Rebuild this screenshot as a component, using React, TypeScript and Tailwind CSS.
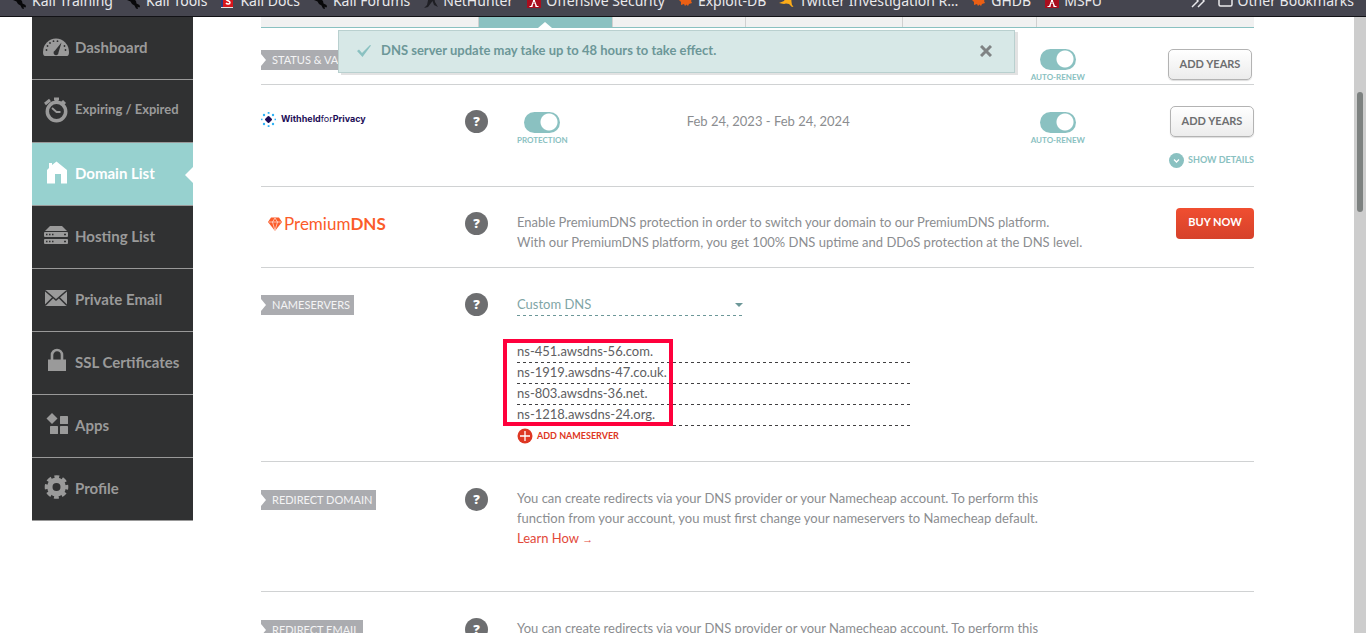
import type { ReactNode } from 'react';

/* ---------- browser bookmark bar ---------- */

function DragonIcon() {
  return (
    <svg className="w-4 h-4 shrink-0" viewBox="0 0 16 16" fill="#08080a">
      <path d="M0 5l4 1 2-2 4 4 .5 2.500 3 1.500.5 2-1 .5-1.500-1L12 16l-2-.5-1.500-3L6 11 4.500 8.500 1 7z" />
    </svg>
  );
}

function DocsIcon() {
  return (
    <svg className="w-4 h-4 shrink-0" viewBox="0 0 16 16">
      <rect x="1" width="2" height="15" fill="#2c3a7d" />
      <rect x="3" width="10" height="14" fill="#d8161c" />
      <rect x="1" y="14" width="12" height="1" fill="#e8e4e4" />
      <path d="M6 10c1 1.500 4 1.500 4-.5S6 8 6 6" stroke="#fff" strokeWidth="1.500" fill="none" />
    </svg>
  );
}

function HunterIcon() {
  return (
    <svg className="w-4 h-4 shrink-0" viewBox="0 0 16 16" fill="#1f1f24">
      <path d="M6 3h5l1 6 3 5-4-2-1.500-4L8 10l-3 4-4 1 3-3z" />
    </svg>
  );
}

function OffsecIcon() {
  return (
    <svg className="w-4 h-4 shrink-0" viewBox="0 0 16 16">
      <rect x="1" width="14" height="15" fill="#a90e1e" />
      <path d="M7 4h2v4l2 5h1.500v1H9.500l-.5-3H7l-.5 3h-3v-1H5l2-5z" fill="#fff" />
      <path d="M7.600 9h.8v3h-.8z" fill="#a90e1e" />
    </svg>
  );
}

function BugIcon() {
  return (
    <svg className="w-4 h-4 shrink-0" viewBox="0 0 16 16" fill="#ea5f14">
      <path d="M3 3l2 1 2-3 3 1 3-1-1 3 2 2-1 2 1 2-3 1-1 2-1.500-1.500L7 13l-1-2-3 1V9L1 7l2-1z" />
    </svg>
  );
}

function YellowIcon() {
  return (
    <svg className="w-4 h-4 shrink-0" viewBox="0 0 16 16" fill="#fbab18">
      <path d="M0 10l5-2 2-4 5-2 .5 7 .5 3 1.500 1.500-1.500.5-3-3-3-.5-2 .5z" />
    </svg>
  );
}

const bookmarks: { label: string; icon: ReactNode }[] = [
  { label: 'Kali Training', icon: <DragonIcon /> },
  { label: 'Kali Tools', icon: <DragonIcon /> },
  { label: 'Kali Docs', icon: <DocsIcon /> },
  { label: 'Kali Forums', icon: <DragonIcon /> },
  { label: 'NetHunter', icon: <HunterIcon /> },
  { label: 'Offensive Security', icon: <OffsecIcon /> },
  { label: 'Exploit-DB', icon: <BugIcon /> },
  { label: 'Twitter Investigation R…', icon: <YellowIcon /> },
  { label: 'GHDB', icon: <BugIcon /> },
  { label: 'MSFU', icon: <OffsecIcon /> },
];

function BookmarkBar() {
  return (
    <nav
      aria-label="Bookmarks"
      className="flex h-[17px] shrink-0 items-end overflow-hidden border-b border-[#121216] bg-[#45454f] px-3 pb-[3px] font-['Noto_Sans',sans-serif] text-sm leading-6 text-[#e9e9ec]"
    >
      <ul className="flex items-end gap-[13px]">
        {bookmarks.map((b) => (
          <li key={b.label}>
            <a href="#" className="flex items-center gap-1 whitespace-nowrap">
              {b.icon}
              {b.label}
            </a>
          </li>
        ))}
      </ul>
      <div className="ml-auto flex items-center gap-3">
        <button type="button" aria-label="More bookmarks">
          <svg className="h-4 w-4" viewBox="0 0 16 16" fill="none" stroke="#e9e9ec" strokeWidth="1.500">
            <path d="M4 3l4 5-6 6M10 3l4 5-6 6" />
          </svg>
        </button>
        <a href="#" className="flex items-center gap-1 whitespace-nowrap">
          <svg className="h-4 w-4" viewBox="0 0 16 16" fill="none" stroke="#e9e9ec" strokeWidth="1.500">
            <rect x="1" y="1" width="13" height="12" rx="1.500" />
          </svg>
          Other Bookmarks
        </a>
      </div>
    </nav>
  );
}

/* ---------- sidebar ---------- */

const iconClass = 'h-7 w-7 shrink-0';

const sideItems: { label: string; icon: ReactNode; active?: boolean; small?: boolean }[] = [
  {
    label: 'Dashboard',
    icon: (
      <svg className={iconClass} viewBox="0 0 28 28" fill="currentColor">
        <path d="M1 19A13 13.500 0 0 1 27 19q0 4-2 4H3q-2 0-2-4z" />
        <g fill="#303132">
          <circle cx="4.500" cy="17" r=".9" />
          <circle cx="5.500" cy="13" r=".9" />
          <circle cx="8" cy="10" r=".9" />
          <circle cx="11.500" cy="8.200" r=".9" />
          <circle cx="15.500" cy="8.200" r=".9" />
          <circle cx="22.500" cy="13" r=".9" />
          <circle cx="23.500" cy="17" r=".9" />
          <path d="M19.500 9.500l-3 10a2.500 2.500 0 1 1-3.500-2z" />
        </g>
      </svg>
    ),
  },
  {
    label: 'Expiring / Expired',
    small: true,
    icon: (
      <svg className={iconClass} viewBox="0 0 28 28" fill="none" stroke="currentColor">
        <circle cx="14.500" cy="15.500" r="9.200" strokeWidth="3.500" />
        <path d="M12 3h5M14.500 3v3M3 8l5-4M20 5l3 3" strokeWidth="3" />
        <path d="M10 12l4.500 4h4" strokeWidth="1.800" />
      </svg>
    ),
  },
  {
    label: 'Domain List',
    active: true,
    icon: (
      <svg className={iconClass} viewBox="0 0 28 28" fill="currentColor">
        <path d="M5 11l2-2V4h3v2l4.500-3.500L25 11v13.500h-6V15h-6v9.500H5z" />
      </svg>
    ),
  },
  {
    label: 'Hosting List',
    icon: (
      <svg className={iconClass} viewBox="0 0 28 28" fill="currentColor">
        <path d="M8 4h12l5 5H3z" />
        <rect x="2" y="10" width="24" height="5" rx="1" />
        <rect x="2" y="17" width="24" height="5" rx="1" />
        <path
          d="M4 11.800h1.500v1.500H4zM7 11.800h1.500v1.500H7zM10 11.800h1.500v1.500H10zM22 11.800h2v1.500h-2zM4 18.800h1.500v1.500H4zM7 18.800h1.500v1.500H7zM10 18.800h1.500v1.500H10zM22 18.800h2v1.500h-2z"
          fill="#303132"
        />
      </svg>
    ),
  },
  {
    label: 'Private Email',
    icon: (
      <svg className={iconClass} viewBox="0 0 28 28" fill="currentColor">
        <rect x="3" y="5" width="22" height="16" />
        <path d="M3 5.500l11 9.500L25 5.500M3 20.500l8-8M25 20.500l-8-8" fill="none" stroke="#303132" strokeWidth="1.600" />
      </svg>
    ),
  },
  {
    label: 'SSL Certificates',
    icon: (
      <svg className={iconClass} viewBox="0 0 28 28" fill="currentColor">
        <rect x="6" y="11.500" width="18" height="11.500" />
        <path d="M10 12V7a5 5 0 0 1 10 0V12" fill="none" stroke="currentColor" strokeWidth="2.600" />
      </svg>
    ),
  },
  {
    label: 'Apps',
    icon: (
      <svg className={iconClass} viewBox="0 0 28 28" fill="currentColor">
        <path d="M10 2l5.500 5.500L10 13 4.500 7.500z" />
        <rect x="18" y="5" width="8" height="8" rx=".6" />
        <rect x="8" y="15" width="8" height="8" rx=".6" />
        <rect x="18" y="15" width="8" height="8" rx=".6" />
      </svg>
    ),
  },
  {
    label: 'Profile',
    icon: (
      <svg className={iconClass} viewBox="0 0 28 28" fill="none" stroke="currentColor">
        <circle cx="14.500" cy="13" r="6.700" strokeWidth="5.400" />
        <circle cx="14.500" cy="13" r="10.200" strokeWidth="3.200" strokeDasharray="4.800 3.211" strokeDashoffset="2.400" />
      </svg>
    ),
  },
];

function Sidebar() {
  return (
    <nav aria-label="Account" className="w-[161px] shrink-0">
      <ul className="text-[15px] font-bold whitespace-nowrap">
        {sideItems.map((item) => (
          <li key={item.label} className="relative">
            <a
              href="#"
              className={
                item.active
                  ? 'flex h-[63px] items-center gap-[5px] border-b border-[#999] bg-[#97d1cf] pb-0.5 pl-2.5 text-white'
                  : 'flex h-[63px] items-center gap-[5px] border-b border-[#999] bg-[#303132] pb-0.5 pl-2.5 text-[#9a9a9a]'
              }
            >
              {item.icon}
              <span className={item.small ? 'text-[13px]' : undefined}>{item.label}</span>
            </a>
            {item.active && (
              <svg className="absolute top-6 right-0 h-4 w-2" viewBox="0 0 8 16" fill="#fff">
                <path d="M8 0v16L0 8z" />
              </svg>
            )}
          </li>
        ))}
      </ul>
    </nav>
  );
}

/* ---------- small parts ---------- */

function Tag({ children }: { children: ReactNode }) {
  return (
    <h2 className="relative h-5 w-fit bg-[#abacb0] pr-1 pl-[11px] text-[11px] leading-5 font-normal whitespace-nowrap text-[#f4f4f5]">
      <svg className="absolute top-1 left-0 h-3 w-[5px]" viewBox="0 0 5 12" fill="#fff">
        <path d="M0 0l5 6-5 6z" />
      </svg>
      {children}
    </h2>
  );
}

function Help() {
  return (
    <button
      type="button"
      aria-label="Help"
      className="flex h-[23px] w-[23px] items-center justify-center rounded-full bg-[#6d6e70] font-['Open_Sans',sans-serif] text-[13px] font-extrabold text-white"
    >
      ?
    </button>
  );
}

function Toggle({ label }: { label: string }) {
  return (
    <label className="flex flex-col items-center text-[8px] leading-3 font-bold text-[#8ac1c1]">
      <input
        type="checkbox"
        defaultChecked
        className="h-[21px] w-9 appearance-none rounded-full bg-[#8ac1c1] bg-[radial-gradient(circle_at_25px_10px,#fff_8px,transparent_9px)]"
      />
      <span className="mt-px">{label}</span>
    </label>
  );
}

function GreyButton({ children }: { children: ReactNode }) {
  return (
    <button
      type="button"
      className="h-[31px] w-[84px] rounded-[5px] border border-[#b3b3b3] bg-linear-to-b from-white to-[#ececec] pb-px text-[11px] font-bold text-[#6d6e70] shadow-[0_1px_1px_#ddd]"
    >
      {children}
    </button>
  );
}

function Row({ className, children }: { className: string; children: ReactNode }) {
  return (
    <section className={`grid grid-cols-[204px_52px_1fr] items-start border-b border-[#d0d2d3] ${className}`}>
      {children}
    </section>
  );
}

/* ---------- page ---------- */

const nameservers = ['ns-451.awsdns-56.com.', 'ns-1919.awsdns-47.co.uk.', 'ns-803.awsdns-36.net.', 'ns-1218.awsdns-24.org.'];

function Tabs() {
  return (
    <div className="flex h-[11px] border-b border-[#8ac1c1] bg-[#f1f1f1]">
      <div className="flex-[218] border-r border-[#d0d0d0]" />
      <div className="relative flex-[134] border-r border-[#d0d0d0] bg-[#8ac1c1]">
        <svg className="absolute -bottom-px left-[59px] h-1.5 w-3.5" viewBox="0 0 14 6" fill="#fff">
          <path d="M7 0l7 6H0z" />
        </svg>
      </div>
      <div className="flex-[133] border-r border-[#d0d0d0]" />
      <div className="flex-[157] border-r border-[#d0d0d0]" />
      <div className="flex-[134] border-r border-[#d0d0d0]" />
      <div className="flex-[218]" />
    </div>
  );
}

function Notice() {
  return (
    <div
      role="status"
      className="absolute top-[13px] left-[77px] flex h-[43px] w-[677px] items-center border border-[#b9d0cf] bg-[#d7e8e7] pr-[22px] pb-0.5 pl-[18px] text-[13px] font-bold text-[#6c9798] shadow-[3px_2px_0_#e2e2e2]"
    >
      <svg className="mr-2.5 h-3.5 w-3.5" viewBox="0 0 14 14" fill="#8ac1c1">
        <path d="M0 7l2-1.500L5 9l8-8 1 .5L5.500 13z" />
      </svg>
      DNS server update may take up to 48 hours to take effect.
      <button type="button" aria-label="Close" className="ml-auto">
        <svg className="h-3 w-3" viewBox="0 0 12 12" fill="none" stroke="#7f8384" strokeWidth="3">
          <path d="M1 1l10 10M11 1L1 11" />
        </svg>
      </button>
    </div>
  );
}

function WithheldLogo() {
  return (
    <div className="flex items-center gap-[5px] font-['Inter',sans-serif] text-[9px] leading-4 font-bold text-[#1d0e57]">
      <svg className="h-[15px] w-[15px]" viewBox="0 0 15 15">
        <path d="M7.500 5L10 7.500 7.500 10 5 7.500z" fill="#1d0e57" stroke="#1d0e57" strokeWidth="2" strokeLinejoin="round" />
        <g fill="#2fb2f5">
          <rect x="6.700" y="0" width="1.800" height="1.800" />
          <rect x="6.700" y="13.200" width="1.800" height="1.800" />
          <rect x="0" y="6.700" width="1.500" height="1.500" />
          <rect x="13.500" y="6.700" width="1.500" height="1.500" />
          <circle cx="3" cy="3" r="1.200" />
          <circle cx="12" cy="3" r="1.200" />
          <circle cx="3" cy="12" r="1.200" />
          <circle cx="12" cy="12" r="1.200" />
        </g>
      </svg>
      <span>
        Withheld<span className="font-normal">for</span>Privacy
      </span>
    </div>
  );
}

function PremiumLogo() {
  return (
    <div className="ml-[7px] flex items-center gap-0.5 text-[17px] leading-6 text-[#fb5c2a]">
      <svg className="h-3.5 w-3.5" viewBox="0 0 14 14" fill="#fb5c2a">
        <path d="M3 .5h8L14 5l-7 9-7-9z" />
        <path d="M1 5h12M4.500 5L7 13.500 9.500 5M4.500 5L7 1l2.500 4" fill="none" stroke="#fff" strokeWidth=".6" />
      </svg>
      <span>
        Premium<b>DNS</b>
      </span>
    </div>
  );
}

export default function App() {
  return (
    <div className="flex h-screen flex-col overflow-hidden bg-white font-['Lato',sans-serif] text-[13px] text-[#8b8d90]">
      <BookmarkBar />
      <div className="flex min-h-0 flex-1 overflow-hidden">
        <div className="flex flex-1 gap-[68px] pr-[100px] pl-8">
          <Sidebar />
          <main className="relative min-w-0 flex-1">
            <Tabs />
            <Row className="h-[57px]">
              <div className="pt-[22px]">
                <Tag>STATUS &amp; VALIDITY</Tag>
              </div>
              <div />
              <div className="flex justify-end gap-[83px] pt-[21px] pr-0.5">
                <Toggle label="AUTO-RENEW" />
                <GreyButton>ADD YEARS</GreyButton>
              </div>
            </Row>
            <Row className="h-[102px] pt-[21px]">
              <div className="pt-[5px]">
                <WithheldLogo />
              </div>
              <div className="pt-1">
                <Help />
              </div>
              <div className="flex items-start">
                <div className="pt-1.5">
                  <Toggle label="PROTECTION" />
                </div>
                <p className="ml-[119px] pt-[5px] leading-5">Feb 24, 2023 - Feb 24, 2024</p>
                <div className="mr-[85px] ml-auto pt-1.5">
                  <Toggle label="AUTO-RENEW" />
                </div>
                <div className="flex flex-col items-end gap-[15px]">
                  <GreyButton>ADD YEARS</GreyButton>
                  <button type="button" className="-ml-4 flex items-center gap-1 text-[9px] leading-4 font-bold text-[#8ac1c1]">
                    <svg className="h-[15px] w-[15px]" viewBox="0 0 15 15">
                      <circle cx="7.500" cy="7.500" r="7.500" fill="#8ac1c1" />
                      <path d="M5 6.500L7.500 9 10 6.500" fill="none" stroke="#fff" strokeWidth="1.300" />
                    </svg>
                    SHOW DETAILS
                  </button>
                </div>
              </div>
            </Row>
            <Row className="h-[81px] pt-[21px]">
              <div className="pt-1">
                <PremiumLogo />
              </div>
              <div className="pt-1">
                <Help />
              </div>
              <div className="flex items-start justify-between">
                <p className="pt-1 leading-5">
                  Enable PremiumDNS protection in order to switch your domain to our PremiumDNS platform.
                  <br />
                  With our PremiumDNS platform, you get 100% DNS uptime and DDoS protection at the DNS level.
                </p>
                <button
                  type="button"
                  className="h-[31px] w-[78px] rounded bg-linear-to-b from-[#f04e30] to-[#d6422b] pb-0.5 text-[11px] font-bold text-white"
                >
                  BUY NOW
                </button>
              </div>
            </Row>
            <Row className="h-[194px] pt-[25px]">
              <div className="pt-0.5">
                <Tag>NAMESERVERS</Tag>
              </div>
              <Help />
              <div>
                <div className="relative w-[226px]">
                  <select
                    aria-label="Nameserver type"
                    className="block h-[23px] w-full appearance-none bg-[repeating-linear-gradient(90deg,#6c9798_0_3px,transparent_3px_6px)] bg-[length:100%_1px] bg-bottom bg-no-repeat pb-px leading-5 text-[#7fa5a6]"
                  >
                    <option>Custom DNS</option>
                  </select>
                  <svg className="pointer-events-none absolute top-2.5 right-0 h-1 w-2" viewBox="0 0 8 4" fill="#6c9798">
                    <path d="M0 0h8L4 4z" />
                  </svg>
                </div>
                <div className="relative mt-[26px] w-[396px]">
                  {nameservers.map((ns, i) => (
                    <input
                      key={ns}
                      type="text"
                      aria-label={`Nameserver ${i + 1}`}
                      defaultValue={ns}
                      className="block h-[21px] w-full bg-[repeating-linear-gradient(90deg,#414042_0_3px,transparent_3px_6px)] bg-[length:100%_1px] bg-bottom bg-no-repeat pb-1 text-[#606062] outline-none"
                    />
                  ))}
                  <div className="pointer-events-none absolute -top-[3px] -left-[14px] h-[87px] w-[170px] border-4 border-[#ff003c]" />
                </div>
                <button type="button" className="mt-0.5 flex items-center gap-1 text-[9px] leading-4 font-bold text-[#de3723]">
                  <svg className="h-4 w-4" viewBox="0 0 16 16">
                    <circle cx="8" cy="8" r="7.500" fill="#de3723" />
                    <path d="M8 3v10M3 8h10" stroke="#fff" strokeWidth="1.300" />
                  </svg>
                  ADD NAMESERVER
                </button>
              </div>
            </Row>
            <Row className="h-[130px] pt-[26px]">
              <div className="pt-0.5">
                <Tag>REDIRECT DOMAIN</Tag>
              </div>
              <Help />
              <p className="leading-5">
                You can create redirects via your DNS provider or your Namecheap account. To perform this
                <br />
                function from your account, you must first change your nameservers to Namecheap default.
                <br />
                <a href="#" className="text-[#e2493a]">
                  Learn How <span className="font-['Liberation_Sans',sans-serif] text-[11px]">→</span>
                </a>
              </p>
            </Row>
            <Row className="pt-[26px]">
              <div className="pt-0.5">
                <Tag>REDIRECT EMAIL</Tag>
              </div>
              <Help />
              <p className="leading-5">
                You can create redirects via your DNS provider or your Namecheap account. To perform this
              </p>
            </Row>
            <Notice />
          </main>
        </div>
        <div className="w-3 shrink-0 bg-[#cdcdcd] px-[3px] pt-[75px]">
          <div className="h-[120px] rounded-full bg-[#7d8180]" />
        </div>
      </div>
    </div>
  );
}
